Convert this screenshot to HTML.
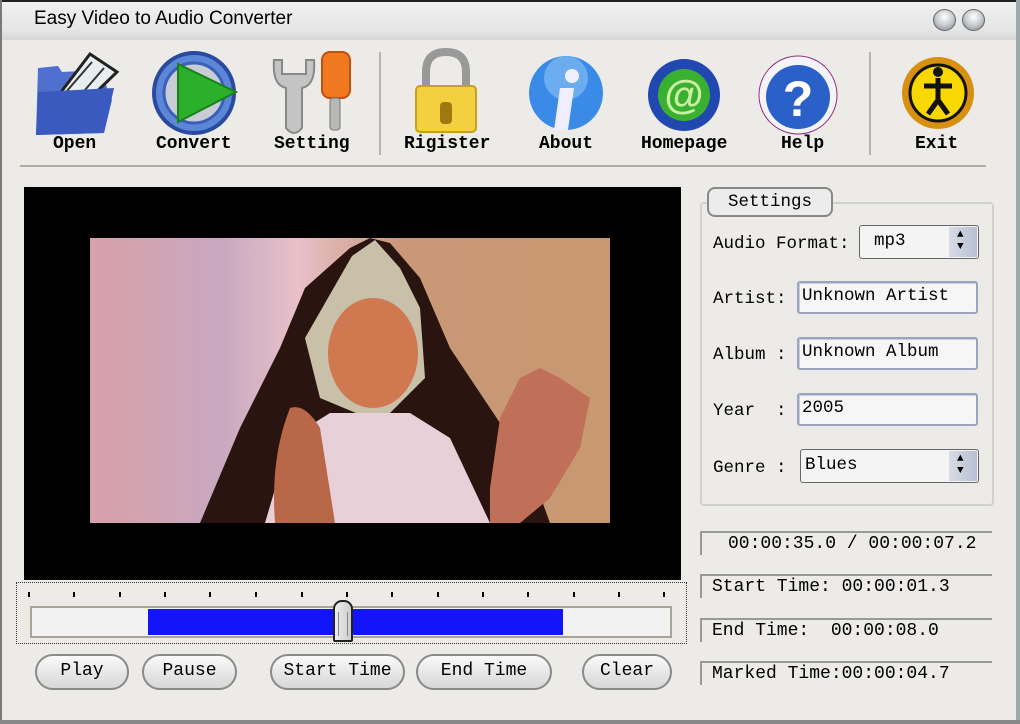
<!DOCTYPE html>
<html><head><meta charset="utf-8"><style>
*{margin:0;padding:0;box-sizing:border-box}
body{width:1020px;height:724px;overflow:hidden;background:#ecebe8;font-family:"Liberation Mono",monospace;position:relative}
.abs{position:absolute}
.lbl{position:absolute;font-family:"Liberation Mono",monospace;font-size:18px;color:#000;font-weight:bold;white-space:pre}
.slbl{position:absolute;font-family:"Liberation Mono",monospace;font-size:17.5px;color:#000;white-space:pre}
.btn{position:absolute;height:36px;border:2px solid #8a8a8a;border-radius:18px;background:linear-gradient(#fafafa,#e4e4e4 60%,#d8d8d8);font-family:"Liberation Mono",monospace;font-size:18px;text-align:center;line-height:31px;color:#000}
.inp{position:absolute;height:33px;border:2px solid #9aa4c0;border-radius:3px;background:#f6f6f6;font-family:"Liberation Mono",monospace;font-size:17.5px;line-height:26px;padding-left:3px;box-shadow:inset 1px 1px 0 #c8cde0;white-space:pre}
.sel{position:absolute;height:34px;border:1px solid #666;border-radius:3px;background:#f4f4f4;font-family:"Liberation Mono",monospace;font-size:17.5px;line-height:30px}
.spin{position:absolute;right:1px;top:1px;bottom:1px;width:28px;background:linear-gradient(90deg,#d8dbe4,#b8c0d4)}
.stat{position:absolute;left:700px;width:292px;height:24px;border-left:2px solid #999;border-top:2px solid #999;font-family:"Liberation Mono",monospace;font-size:18px;line-height:22px;white-space:pre}
</style></head><body>
<div class="abs" style="left:0;top:0;width:1020px;height:2px;background:#222"></div>
<div class="abs" style="left:0;top:2px;width:1020px;height:38px;background:linear-gradient(#f0f0f0,#e6e6e6 70%,#d8d8d8)"></div>
<div class="abs" style="left:0;top:0;width:2px;height:724px;background:#7a7a7a"></div>
<div class="abs" style="left:1016px;top:0;width:4px;height:724px;background:#9aa"></div>
<div class="abs" style="left:0;top:720px;width:1020px;height:4px;background:#888"></div>
<div class="abs" style="left:34px;top:8px;font-family:'Liberation Sans',sans-serif;font-size:19px;color:#000">Easy Video to Audio Converter</div>
<div class="abs" style="left:933px;top:9px;width:23px;height:22px;border-radius:50%;background:radial-gradient(circle at 50% 35%,#fff,#c8ccd0 50%,#7a7f86);border:1px solid #666"></div>
<div class="abs" style="left:962px;top:9px;width:23px;height:22px;border-radius:50%;background:radial-gradient(circle at 50% 35%,#fff,#c8ccd0 50%,#7a7f86);border:1px solid #666"></div>

<svg class="abs" style="left:0;top:40px" width="1020" height="130">
 <path d="M38 28 L58 26 L62 32 L100 30 L112 60 L104 93 L36 95 Z" fill="#5070d0"/>
 <path d="M58 56 L90 14 L117 32 L84 64 Z" fill="#e8eef0" stroke="#222" stroke-width="3"/>
 <path d="M66 52 L92 22 M78 58 L104 28" stroke="#333" stroke-width="2"/>
 <path d="M38 52 L114 48 L104 93 L36 95 Z" fill="#3a5ac0"/>
 <circle cx="194" cy="53" r="40" fill="#5c86d8" stroke="#2a4aa0" stroke-width="4"/>
 <circle cx="194" cy="53" r="30" fill="#c8ccd4" stroke="#3a60b8" stroke-width="3"/>
 <path d="M178 24 L236 52 L178 82 Z" fill="#2ab02a" stroke="#1a801a" stroke-width="2"/>
 <path d="M274 20 Q272 45 286 48 L286 88 Q294 98 302 88 L302 48 Q316 45 314 20 L306 20 L306 34 L282 34 L282 20 Z" fill="#c4c4c4" stroke="#888" stroke-width="2"/>
 <rect x="322" y="12" width="28" height="46" rx="8" fill="#f07820" stroke="#c05010" stroke-width="2"/>
 <rect x="330" y="58" width="10" height="32" rx="3" fill="#b8b8b8" stroke="#777"/>
 <line x1="380" y1="12" x2="380" y2="115" stroke="#b4b4b4" stroke-width="2"/>
 <path d="M426 50 L426 32 Q426 12 446 12 Q466 12 466 32 L466 50" fill="none" stroke="#999" stroke-width="8"/>
 <rect x="416" y="46" width="60" height="46" rx="4" fill="#f4d040" stroke="#c8a020" stroke-width="2"/>
 <rect x="440" y="62" width="12" height="22" rx="4" fill="#a07810"/>
 <circle cx="566" cy="53" r="37" fill="#3a8ae8"/>
 <circle cx="566" cy="38" r="22" fill="#8cc4f4" opacity=".6"/>
 <path d="M560 48 L574 48 L568 90 L554 90 Z" fill="#eef"/>
 <circle cx="572" cy="36" r="7" fill="#eef"/>
 <circle cx="684" cy="55" r="36" fill="#2048b0"/>
 <circle cx="684" cy="55" r="26" fill="#3ab030"/>
 <text x="684" y="68" text-anchor="middle" font-family="Liberation Sans" font-weight="bold" font-size="40" fill="#c8f0a0">@</text>
 <circle cx="798" cy="55" r="39" fill="#f4f4f8" stroke="#903080" stroke-width="1"/>
 <circle cx="798" cy="57" r="32" fill="#2a60c8"/>
 <text x="798" y="76" text-anchor="middle" font-family="Liberation Sans" font-weight="bold" font-size="50" fill="#fff">?</text>
 <line x1="870" y1="12" x2="870" y2="115" stroke="#b4b4b4" stroke-width="2"/>
 <circle cx="938" cy="53" r="36" fill="#d89010"/>
 <circle cx="938" cy="53" r="28" fill="#f8d800" stroke="#111" stroke-width="3"/>
 <circle cx="938" cy="32" r="5" fill="#111"/>
 <path d="M938 38 L938 60 M924 46 L952 46 M938 60 L928 74 M938 60 L948 74" stroke="#111" stroke-width="5"/>
</svg>
<div class="lbl" style="left:53px;top:134px">Open</div>
<div class="lbl" style="left:156px;top:134px">Convert</div>
<div class="lbl" style="left:274px;top:134px">Setting</div>
<div class="lbl" style="left:404px;top:134px">Rigister</div>
<div class="lbl" style="left:539px;top:134px">About</div>
<div class="lbl" style="left:641px;top:134px">Homepage</div>
<div class="lbl" style="left:781px;top:134px">Help</div>
<div class="lbl" style="left:915px;top:134px">Exit</div>
<div class="abs" style="left:20px;top:165px;width:966px;height:2px;background:#b0aca4"></div>

<div class="abs" style="left:24px;top:187px;width:657px;height:393px;background:#000"></div>
<svg class="abs" style="left:90px;top:238px" width="520" height="285">
 <defs>
  <linearGradient id="bg" x1="0" x2="1"><stop offset="0" stop-color="#d8a0a8"/><stop offset=".25" stop-color="#c8a8c0"/><stop offset=".4" stop-color="#e8c0c8"/><stop offset=".6" stop-color="#c89878"/><stop offset="1" stop-color="#c89870"/></linearGradient>
 </defs>
 <rect width="520" height="285" fill="url(#bg)"/>
 <path d="M110 285 L150 190 L190 110 L215 50 L260 10 L280 0 L300 5 L330 40 L360 110 L400 170 L440 230 L460 285 Z" fill="#2a1410"/>
 <path d="M215 100 L262 18 L285 2 L310 30 L330 70 L335 140 L290 185 L230 160 Z" fill="#c8c0a8"/>
 <ellipse cx="283" cy="115" rx="45" ry="55" fill="#d07850"/>
 <path d="M175 285 L200 200 L240 175 L320 175 L360 200 L400 285 Z" fill="#e8d0d8"/>
 <path d="M185 285 Q180 220 200 170 Q215 165 230 190 L245 285 Z" fill="#b86848"/>
 <path d="M400 250 L410 180 L430 140 L450 130 L470 140 L500 160 L490 210 L460 260 L430 285 L400 285 Z" fill="#c07058"/>
</svg>

<div class="abs" style="left:16px;top:582px;width:671px;height:62px;border:1px dotted #333"></div>
<svg class="abs" style="left:16px;top:585px" width="671" height="20">
 <g stroke="#000" stroke-width="2">
  <line x1="13" y1="7" x2="13" y2="12"/><line x1="58" y1="7" x2="58" y2="12"/><line x1="104" y1="7" x2="104" y2="12"/><line x1="149" y1="7" x2="149" y2="12"/><line x1="194" y1="7" x2="194" y2="12"/><line x1="240" y1="7" x2="240" y2="12"/><line x1="286" y1="7" x2="286" y2="12"/><line x1="331" y1="7" x2="331" y2="12"/><line x1="376" y1="7" x2="376" y2="12"/><line x1="422" y1="7" x2="422" y2="12"/><line x1="467" y1="7" x2="467" y2="12"/><line x1="512" y1="7" x2="512" y2="12"/><line x1="558" y1="7" x2="558" y2="12"/><line x1="603" y1="7" x2="603" y2="12"/><line x1="648" y1="7" x2="648" y2="12"/>
 </g>
</svg>
<div class="abs" style="left:30px;top:606px;width:642px;height:32px;background:#f2f2f2;border:2px solid #a8a498"></div>
<div class="abs" style="left:148px;top:609px;width:415px;height:26px;background:#1414f8"></div>
<div class="abs" style="left:333px;top:600px;width:20px;height:42px;background:linear-gradient(90deg,#eee,#ccc);border:2px solid #222;border-radius:9px 9px 2px 2px"></div>
<div class="abs" style="left:338px;top:612px;width:10px;height:24px;border-left:1px solid #888;border-right:1px solid #888"></div>

<div class="btn" style="left:35px;top:654px;width:94px">Play</div>
<div class="btn" style="left:142px;top:654px;width:95px">Pause</div>
<div class="btn" style="left:270px;top:654px;width:135px">Start Time</div>
<div class="btn" style="left:416px;top:654px;width:136px">End Time</div>
<div class="btn" style="left:582px;top:654px;width:90px">Clear</div>

<div class="abs" style="left:700px;top:202px;width:294px;height:304px;border:2px solid #d0d0d0;border-radius:4px"></div>
<div class="abs" style="left:707px;top:187px;width:126px;height:30px;border:2px solid #888;border-radius:8px;background:#ececec;font-size:17.5px;text-align:center;line-height:26px">Settings</div>
<div class="slbl" style="left:713px;top:234px">Audio Format:</div>
<div class="sel" style="left:859px;top:225px;width:120px;padding-left:14px">mp3<div class="spin"><span style="position:absolute;left:8px;top:2px;font-size:11px;line-height:12px">▲<br>▼</span></div></div>
<div class="slbl" style="left:713px;top:289px">Artist:</div>
<div class="inp" style="left:797px;top:281px;width:181px">Unknown Artist</div>
<div class="slbl" style="left:713px;top:345px">Album :</div>
<div class="inp" style="left:797px;top:337px;width:181px">Unknown Album</div>
<div class="slbl" style="left:713px;top:401px">Year  :</div>
<div class="inp" style="left:797px;top:393px;width:181px">2005</div>
<div class="slbl" style="left:713px;top:458px">Genre :</div>
<div class="sel" style="left:800px;top:449px;width:179px;padding-left:4px">Blues<div class="spin"><span style="position:absolute;left:8px;top:2px;font-size:11px;line-height:12px">▲<br>▼</span></div></div>

<div class="stat" style="top:531px;padding-left:26px">00:00:35.0 / 00:00:07.2</div>
<div class="stat" style="top:574px;padding-left:10px">Start Time: 00:00:01.3</div>
<div class="stat" style="top:618px;padding-left:10px">End Time:  00:00:08.0</div>
<div class="stat" style="top:661px;padding-left:10px">Marked Time:00:00:04.7</div>
</body></html>
